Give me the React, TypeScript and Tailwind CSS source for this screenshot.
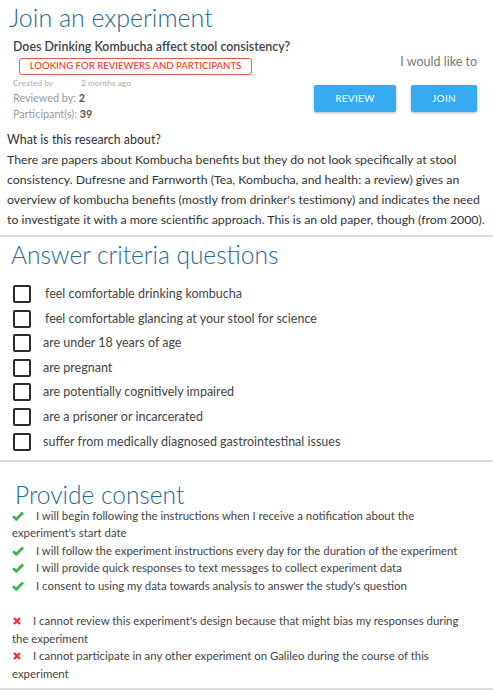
import React from "react";

const criteria = [
  { t: "feel comfortable drinking kombucha", x: "pl-[14px]" },
  { t: "feel comfortable glancing at your stool for science", x: "pl-[14px]" },
  { t: "are under 18 years of age", x: "pl-[12px]" },
  { t: "are pregnant", x: "pl-[12px]" },
  { t: "are potentially cognitively impaired", x: "pl-[12px]" },
  { t: "are a prisoner or incarcerated", x: "pl-[12px]" },
  { t: "suffer from medically diagnosed gastrointestinal issues", x: "pl-[12px]" },
];

const paraLines = [
  "There are papers about Kombucha benefits but they do not look specifically at stool",
  "consistency. Dufresne and Farnworth (Tea, Kombucha, and health: a review) gives an",
  "overview of kombucha benefits (mostly from drinker's testimony) and indicates the need",
  "to investigate it with a more scientific approach. This is an old paper, though (from 2000).",
];

function Check() {
  return (
    <svg width="12" height="10" viewBox="0 0 12 10" className="inline-block align-[-1px]">
      <path d="M1 5.2 L4.3 8.3 L11 1.6" fill="none" stroke="#3db34a" strokeWidth="2.8" />
    </svg>
  );
}

function Cross() {
  return (
    <svg width="8" height="8" viewBox="0 0 8 8" className="ml-[1px] inline-block align-[0px]">
      <path d="M1 1 L7 7 M7 1 L1 7" fill="none" stroke="#ee3030" strokeWidth="2.4" />
    </svg>
  );
}

export default function App() {
  return (
    <div className="w-[493px] bg-white text-[#444]" style={{ fontFamily: "Lato, 'Open Sans', sans-serif" }}>
      <section className="px-[7px] pb-[5px]">
        <h1 className="pl-[2px] pt-[2px] text-[25px] font-light leading-[30px] text-[#1d6a96]">
          Join an experiment
        </h1>
        <div className="flex justify-between pl-[6px] pr-[9px]">
          <div className="pt-[5px]">
            <div className="whitespace-nowrap text-[12.4px] font-semibold leading-[20px] text-[#444]">
              Does Drinking Kombucha affect stool consistency?
            </div>
            <div className="ml-[6px] mt-[1px] flex h-[17px] w-[233px] items-center justify-center rounded-[3px] border border-[#f05a50] text-[9.6px] font-medium text-[#ee3a2e]">
              LOOKING FOR REVIEWERS AND PARTICIPANTS
            </div>
            <div className="mt-[1px] flex items-center whitespace-nowrap text-[8.4px] leading-[14px] text-[#aaa]">
              <span className="w-[42px]">Created by</span>
              <span className="w-[26px] tracking-[2px] text-[#e6e6e6]">....</span>
              <span>2 months ago</span>
            </div>
            <div className="text-[10.8px] leading-[16px] text-[#999]">
              Reviewed by: <span className="font-bold text-[#555]">2</span>
            </div>
            <div className="text-[10.8px] leading-[16px] text-[#999]">
              Participant(s): <span className="font-bold text-[#555]">39</span>
            </div>
          </div>
          <div className="flex flex-col items-end pt-[21px]">
            <div className="text-[12.5px] leading-[18px] text-[#777]">I would like to</div>
            <div className="mt-[14px] flex gap-[15px]">
              <button className="h-[27px] w-[82px] rounded-[2px] bg-[#36abf1] text-[10px] tracking-[0.3px] text-white shadow-[0_1px_3px_rgba(0,0,0,0.3)]">
                REVIEW
              </button>
              <button className="h-[27px] w-[66px] rounded-[2px] bg-[#36abf1] text-[10px] tracking-[0.3px] text-white shadow-[0_1px_3px_rgba(0,0,0,0.3)]">
                JOIN
              </button>
            </div>
          </div>
        </div>
        <div className="mt-[8px] text-[12.4px] leading-[20px] text-[#333]">What is this research about?</div>
        <p className="text-[12.3px] leading-[20px] text-[#333]">
          {paraLines.map((l) => (
            <span key={l} className="block whitespace-nowrap">{l}</span>
          ))}
        </p>
      </section>
      <div className="h-[2px] bg-[#dcdcdc]" />
      <section className="px-[11px] pb-[9px]">
        <h2 className="pt-[3px] text-[24.5px] font-light leading-[30px] text-[#1d6a96]">
          Answer criteria questions
        </h2>
        <div className="mt-[15px] flex flex-col gap-[6.6px] pl-[2px]">
          {criteria.map((c) => (
            <div key={c.t} className="flex h-[18px] items-center">
              <span className="h-[18px] w-[18px] shrink-0 rounded-[2px] border-[2px] border-[#2b2b2b]" />
              <span className={`${c.x} text-[12.5px] leading-[18px] text-[#444]`}>{c.t}</span>
            </div>
          ))}
        </div>
      </section>
      <div className="h-[2px] bg-[#dcdcdc]" />
      <section className="pb-[5px] pl-[12px] pr-[23px] text-[11.4px] leading-[17.6px] text-[#444]">
        <h2 className="pl-[3px] pt-[18px] text-[24.5px] font-light leading-[30px] text-[#1d6a96]">
          Provide consent
        </h2>
        <div className="mt-[-3px]">
          <div>
            <Check /><span className="pl-[12px]">I will begin following the instructions when I receive a notification about the experiment's start date</span>
          </div>
          <div>
            <Check /><span className="pl-[12px]">I will follow the experiment instructions every day for the duration of the experiment</span>
          </div>
          <div>
            <Check /><span className="pl-[12px]">I will provide quick responses to text messages to collect experiment data</span>
          </div>
          <div>
            <Check /><span className="pl-[12px]">I consent to using my data towards analysis to answer the study's question</span>
          </div>
          <div className="h-[17.6px]" />
          <div>
            <Cross /><span className="pl-[12px]">I cannot review this experiment's design because that might bias my responses during the experiment</span>
          </div>
          <div>
            <Cross /><span className="pl-[12px]">I cannot participate in any other experiment on Galileo during the course of this experiment</span>
          </div>
        </div>
      </section>
      <div className="h-[2px] bg-[#dcdcdc]" />
    </div>
  );
}
